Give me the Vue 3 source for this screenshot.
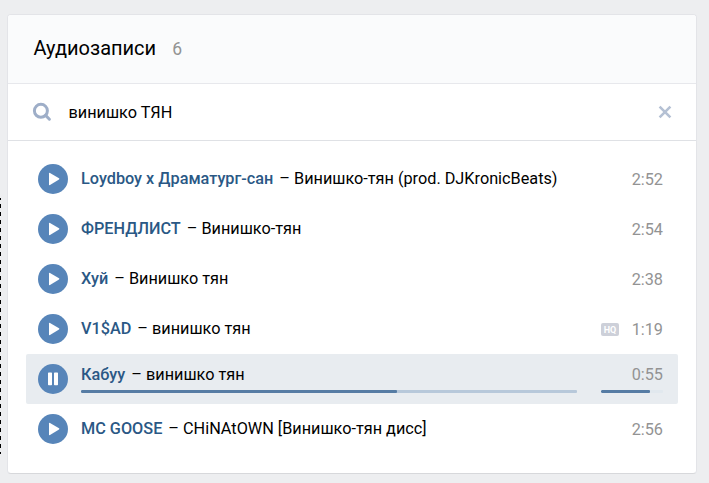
<template>
  <main class="page">
    <div class="guide"></div>

    <section class="card">
      <header class="card-header">
        <h2>Аудиозаписи</h2>
        <span class="count">{{ tracks.length }}</span>
      </header>

      <div class="search">
        <svg class="search-icon" width="20" height="20" viewBox="0 0 20 20">
          <circle cx="8.9" cy="8.8" r="6.5" />
          <path d="M13.6 13.4L17.4 17.2" />
        </svg>
        <input v-model="query" type="text" aria-label="Поиск" />
        <button class="clear" type="button" aria-label="Очистить" @click="query = ''">
          <svg width="14" height="14" viewBox="0 0 14 14">
            <path d="M1.6 1.6L12.4 12.4M12.4 1.6L1.6 12.4" />
          </svg>
        </button>
      </div>

      <ul class="tracks">
        <li
          v-for="(track, index) in tracks"
          :key="index"
          class="track"
          :class="{ 'track--active': index === current }"
        >
          <button class="play" type="button" @click="toggle(index)">
            <svg width="30" height="30" viewBox="0 0 30 30">
              <path
                v-if="index === current"
                d="M10.7 8.5h2.6q.7 0 .7.7v11.400q0 .7-.7.7h-2.6q-.7 0-.7-.7V9.200q0-.7.7-.7zM16.700 8.500h2.600q.7 0 .7.7v11.400q0 .7-.7.7h-2.600q-.7 0-.7-.7V9.200q0-.7.7-.7z"
              />
              <path v-else d="M11 9.600q0-1.100 1-.6l9 5.300q.8.600 0 1.200l-9 5.500q-1 .5-1-.6z" />
            </svg>
          </button>

          <div class="info">
            <div class="line">
              <span class="artist">{{ track.artist }}</span>
              <span class="dash">–</span>
              <span class="title">{{ track.title }}</span>
            </div>
            <div v-if="index === current" class="bar">
              <div class="bar-fill" :style="{ width: progress + '%' }"></div>
            </div>
          </div>

          <div class="side">
            <div class="meta">
              <span v-if="track.hq" class="hq">HQ</span>
              <span class="duration">{{ track.duration }}</span>
            </div>
            <div v-if="index === current" class="bar">
              <div class="bar-fill" :style="{ width: volume + '%' }"></div>
            </div>
          </div>
        </li>
      </ul>
    </section>
  </main>
</template>

<script setup>
import { ref } from 'vue'

const query = ref('винишко ТЯН')
const current = ref(4)
const progress = ref(63.8)
const volume = ref(79)

const tracks = [
  { artist: 'Loydboy x Драматург-сан', title: 'Винишко-тян (prod. DJKronicBeats)', duration: '2:52' },
  { artist: 'ФРЕНДЛИСТ', title: 'Винишко-тян', duration: '2:54' },
  { artist: 'Хуй', title: 'Винишко тян', duration: '2:38' },
  { artist: 'V1$AD', title: 'винишко тян', duration: '1:19', hq: true },
  { artist: 'Кабуу', title: 'винишко тян', duration: '0:55' },
  { artist: 'MC GOOSE', title: 'CHiNAtOWN [Винишко-тян дисс]', duration: '2:56' }
]

function toggle(index) {
  current.value = current.value === index ? -1 : index
}
</script>

<style>
body {
  background: #edeef0;
}
</style>

<style scoped>
.page {
  display: flex;
  align-items: flex-start;
  box-sizing: border-box;
  height: 483px;
  overflow: hidden;
  background: #edeef0;
  font-family: Roboto, 'Noto Sans', sans-serif;
  color: #000;
}

.guide {
  width: 1px;
  height: 256px;
  margin-top: 198px;
  background: repeating-linear-gradient(#000 0 2px, transparent 2px 6px, #000 6px 8px);
}

.card {
  box-sizing: border-box;
  width: 690px;
  height: 460px;
  margin: 14px 0 0 6px;
  background: #fff;
  border: 1px solid #e3e4e8;
  border-bottom-color: #d7d8db;
  border-radius: 4px;
  overflow: hidden;
}

.card-header {
  display: flex;
  align-items: center;
  box-sizing: border-box;
  height: 69px;
  padding: 0 25.5px 2px;
  background: #fafbfc;
  border-bottom: 1px solid #e7e8ec;
}

h2 {
  margin: 0;
  font-size: 20px;
  font-weight: 400;
  line-height: 24px;
}

.count {
  margin: 1px 0 0 16px;
  font-size: 17.5px;
  color: #939393;
}

.search {
  display: flex;
  align-items: center;
  box-sizing: border-box;
  height: 57px;
  padding: 0 24px;
  border-bottom: 1px solid #dfe1e5;
}

.search-icon {
  fill: none;
  stroke: #9eaec8;
  stroke-width: 3;
  stroke-linecap: round;
}

.search input {
  flex: 1;
  margin: 0 0 0 16.5px;
  padding: 0;
  border: 0;
  outline: none;
  font: 16.25px Roboto, 'Noto Sans', sans-serif;
  color: #000;
}

.clear {
  display: flex;
  padding: 0;
  border: 0;
  background: none;
}

.clear path {
  fill: none;
  stroke: #b5c1d4;
  stroke-width: 2.6;
}

.tracks {
  margin: 0;
  padding: 13px 18px 0;
  list-style: none;
}

.track {
  display: flex;
  align-items: center;
  box-sizing: border-box;
  height: 50px;
  padding: 0 15px 0 12px;
  border-radius: 2px;
}

.track--active {
  background: #e8ecf0;
}

.play {
  display: flex;
  flex: none;
  width: 30px;
  height: 30px;
  margin-right: 13px;
  padding: 0;
  border: 0;
  border-radius: 50%;
  background: #5785b9;
}

.play path {
  fill: #fff;
}

.info {
  flex: 1;
}

.line {
  display: flex;
  font-size: 16.25px;
  line-height: 20px;
  white-space: nowrap;
}

.artist {
  font-weight: 500;
  color: #2a5885;
}

.dash {
  margin: 0 4px 0 6px;
}

.side {
  width: 62px;
  margin-left: 24px;
}

.meta {
  display: flex;
  align-items: center;
  justify-content: flex-end;
  padding-top: 1px;
  font-size: 16.25px;
  line-height: 20px;
  color: #939393;
}

.hq {
  width: 18px;
  height: 13px;
  margin-right: auto;
  border-radius: 2px;
  background: #cdd0d9;
  color: #fff;
  font-size: 9px;
  font-weight: 700;
  line-height: 14px;
  text-align: center;
}

.bar {
  height: 3px;
  margin-top: 5px;
  border-radius: 1px;
  background: #b7c8da;
  overflow: hidden;
}

.track--active .meta {
  padding-top: 0;
}

.side .bar {
  background: #e1e8ee;
}

.bar-fill {
  height: 3px;
  border-radius: 1px;
  background: #567ca4;
}
</style>
